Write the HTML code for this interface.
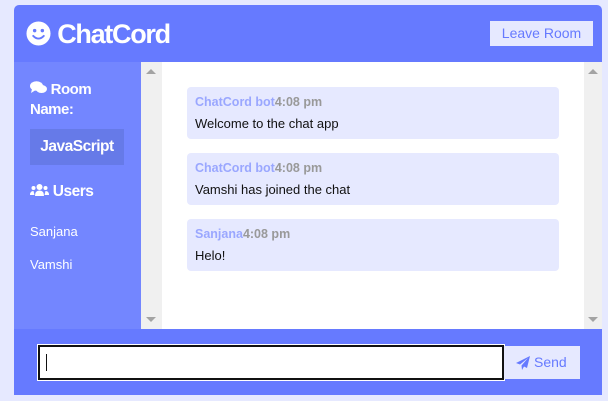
<!DOCTYPE html>
<html><head><style>
*{margin:0;padding:0;box-sizing:border-box}
body{width:608px;height:401px;background:#e6e9ff;font-family:"Liberation Sans",sans-serif;position:relative;overflow:hidden}
.c{position:absolute;left:14px;top:5px;width:588px;height:390px;border-radius:5px 5px 0 0;overflow:hidden}
.hd{position:absolute;left:0;top:0;width:588px;height:57px;background:#667aff}
.logo{position:absolute;left:12px;top:14px;color:#fff;font-size:27px;font-weight:bold;letter-spacing:-1.3px}
.leave{position:absolute;left:476px;top:16px;width:103px;height:25px;background:#e6e9ff;color:#667aff;font-size:14px;text-align:center;line-height:25px}
.sb{position:absolute;left:0;top:57px;width:127px;height:267px;background:#7386ff;color:#fff}
.sc{position:absolute;top:57px;height:267px;width:21px;background:#f0f0f0}
.tri{position:absolute;left:5px;width:0;height:0;border-left:5px solid transparent;border-right:5px solid transparent}
.up{top:7px;border-bottom:5px solid #a3a3a3}
.dn{bottom:7px;border-top:5px solid #a3a3a3}
.chat{position:absolute;left:148px;top:57px;width:422px;height:267px;background:#fff}
.m{position:absolute;left:25px;width:372px;height:52px;background:#e6e9ff;border-radius:4px;padding:8px 8px;font-size:13px}
.meta{font-weight:bold;color:#9aa7ff;font-size:12.5px}
.meta span{color:#999}
.txt{margin-top:7px;color:#111}
.ft{position:absolute;left:0;top:324px;width:588px;height:66px;background:#667aff}
.inp{position:absolute;left:24px;top:16px;width:466px;height:35px;background:#fff;border:2px solid #111;outline:1px solid #fff}
.caret{position:absolute;left:6px;top:7px;width:1px;height:17px;background:#111}
.send{position:absolute;left:490px;top:17px;width:76px;height:33px;background:#e6e9ff;color:#667aff;font-size:14px;line-height:33px;padding-left:30px}
</style></head><body>
<div class="c">
<div class="hd">
<div class="logo"><svg width="25" height="25" viewBox="0 0 26 26" style="vertical-align:-3px"><circle cx="13" cy="13" r="12.5" fill="#fff"/><circle cx="9" cy="10" r="1.8" fill="#667aff"/><circle cx="17" cy="10" r="1.8" fill="#667aff"/><path d="M7.5 15.5 Q13 21 18.5 15.5" stroke="#667aff" stroke-width="2" fill="none" stroke-linecap="round"/></svg> ChatCord</div>
<div class="leave">Leave Room</div>
</div>
<div class="sb">
<div style="position:absolute;left:16px;top:18px;font-size:15px;font-weight:bold;line-height:20px;letter-spacing:-0.5px"><svg width="17" height="13" viewBox="0 0 17 13"><ellipse cx="6.5" cy="5" rx="6.5" ry="4.8" fill="#fff"/><path d="M2 8 L1 12 L5 9.5Z" fill="#fff"/><ellipse cx="11.5" cy="8" rx="5.5" ry="4" fill="#fff"/></svg> Room<br>Name:</div>
<div style="position:absolute;left:16px;top:67px;width:94px;height:36px;background:#667ae8;font-size:15.5px;font-weight:bold;line-height:36px;text-align:center;letter-spacing:-0.5px">JavaScript</div>
<div style="position:absolute;left:16px;top:121px;font-size:15.5px;font-weight:bold;letter-spacing:-0.5px"><svg width="19" height="12" viewBox="0 0 19 12"><circle cx="9.5" cy="3" r="3" fill="#fff"/><circle cx="3.5" cy="4" r="2" fill="#fff"/><circle cx="15.5" cy="4" r="2" fill="#fff"/><path d="M5 12 Q5 6.5 9.5 6.5 Q14 6.5 14 12Z M0 11 Q0 7 3.5 7 L4.5 11Z M19 11 Q19 7 15.5 7 L14.5 11Z" fill="#fff"/></svg> Users</div>
<div style="position:absolute;left:16px;top:162px;font-size:13px">Sanjana</div>
<div style="position:absolute;left:16px;top:195px;font-size:13px">Vamshi</div>
</div>
<div class="sc" style="left:127px"><div class="tri up"></div><div class="tri dn"></div></div>
<div class="chat">
<div class="m" style="top:25px"><div class="meta">ChatCord bot<span>4:08 pm</span></div><div class="txt">Welcome to the chat app</div></div>
<div class="m" style="top:91px"><div class="meta">ChatCord bot<span>4:08 pm</span></div><div class="txt">Vamshi has joined the chat</div></div>
<div class="m" style="top:157px"><div class="meta">Sanjana<span>4:08 pm</span></div><div class="txt">Helo!</div></div>
</div>
<div class="sc" style="left:570px;width:18px"><div class="tri up" style="left:4px"></div><div class="tri dn" style="left:4px"></div></div>
<div class="ft">
<div class="inp"><div class="caret"></div></div>
<div class="send"><svg width="14" height="14" viewBox="0 0 14 14" style="position:absolute;left:12px;top:10px"><path d="M14 0 L0 7 L4 8.5 L12 2 L5.5 9.5 L6 14 L8 10.5 L11 12Z" fill="#667aff"/></svg>Send</div>
</div>
</div>
</body></html>
